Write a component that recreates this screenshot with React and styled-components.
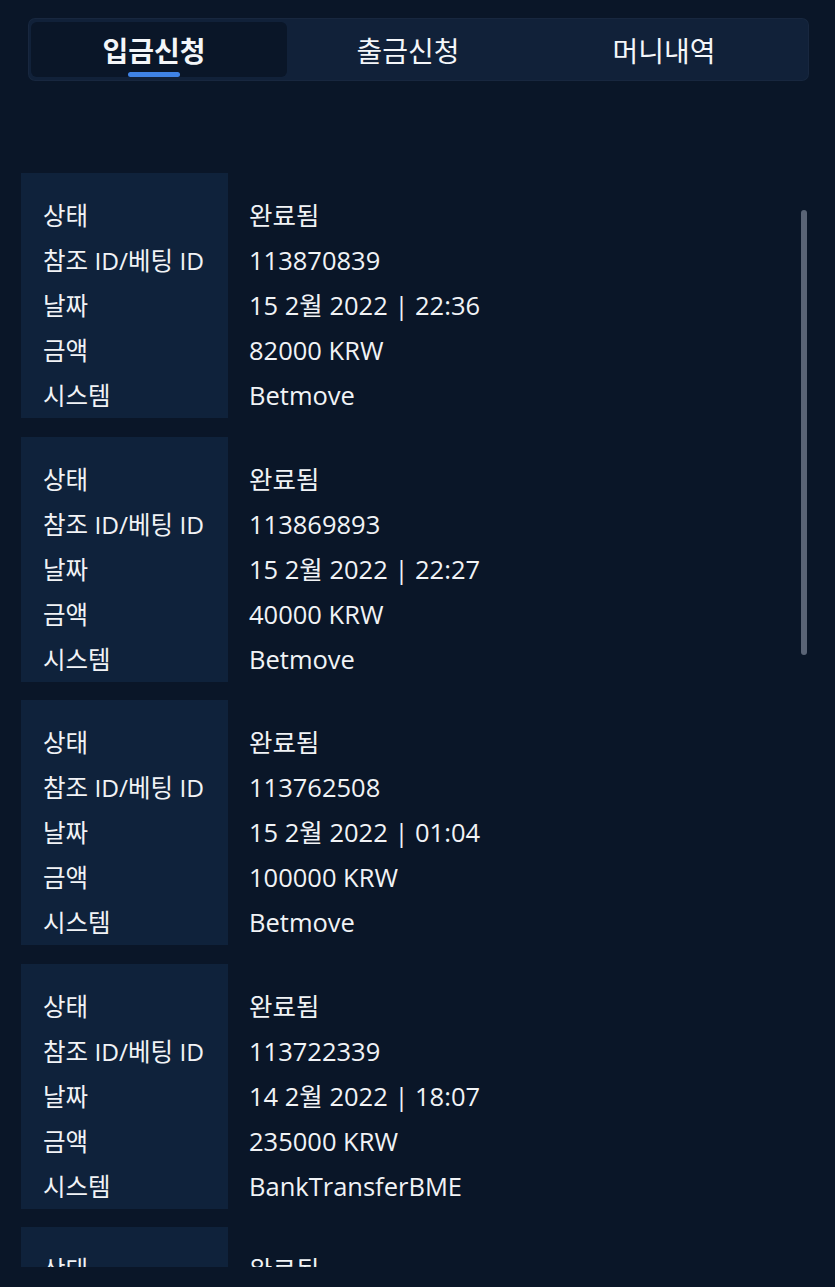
import React from "react";
import styled, { createGlobalStyle } from "styled-components";

const Global = createGlobalStyle`
  html, body { margin: 0; padding: 0; background: #0a1628; }
  body { font-family: "Open Sans", "Noto Sans CJK KR", sans-serif; color: #f1f3f6; }
  #root { min-height: 1287px; }
`;

const Page = styled.div`
  width: 835px;
  height: 1287px;
  background: #0a1628;
  display: flex;
  flex-direction: column;
  overflow: hidden;
`;

const TabBar = styled.div`
  margin: 18px 26px 0 28px;
  height: 63px;
  box-sizing: border-box;
  padding: 4px 10px 4px 3px;
  background: #112139;
  border-radius: 7px;
  box-shadow: inset 0 0 0 1px rgba(255, 255, 255, 0.03);
  display: flex;
`;

const Tab = styled.div`
  position: relative;
  flex: 0 0 256px;
  display: flex;
  align-items: center;
  justify-content: center;
  padding-right: ${(p) => (p.$active ? "10px" : "14px")};
  box-sizing: border-box;
  font-family: "Noto Sans CJK KR", sans-serif;
  font-size: 28px;
  font-weight: ${(p) => (p.$active ? 700 : 400)};
  color: #f4f6f9;
  background: ${(p) => (p.$active ? "#0a1628" : "transparent")};
  border-radius: 6px;
`;

const Indicator = styled.span`
  position: absolute;
  bottom: 0;
  left: 97px;
  width: 52px;
  height: 5px;
  border-radius: 3px;
  background: #3f83e6;
`;

const Viewport = styled.div`
  position: relative;
  margin-top: 92px;
  height: 1094px;
  overflow: hidden;
`;

const List = styled.div`
  display: flex;
  flex-direction: column;
  gap: 18.5px;
  padding-left: 21px;
`;

const Card = styled.div`
  display: grid;
  grid-template-columns: 207px 1fr;
  height: 245px;
  flex: 0 0 245px;
`;

const Col = styled.div`
  padding: 20px 0 0 ${(p) => (p.$label ? "22px" : "21px")};
  background: ${(p) => (p.$label ? "#0f223b" : "transparent")};
  display: flex;
  flex-direction: column;
  font-size: ${(p) => (p.$label ? "24.5px" : "25.5px")};
`;

const Line = styled.div`
  height: 45px;
  line-height: 45px;
  white-space: nowrap;
  color: #f1f3f6;
`;

const Thumb = styled.div`
  position: absolute;
  left: 801px;
  top: 37px;
  width: 6px;
  height: 445px;
  border-radius: 3px;
  background: #5a6476;
`;

const labels = ["상태", "참조 ID/베팅 ID", "날짜", "금액", "시스템"];

const rows = [
  ["완료됨", "113870839", "15 2월 2022 | 22:36", "82000 KRW", "Betmove"],
  ["완료됨", "113869893", "15 2월 2022 | 22:27", "40000 KRW", "Betmove"],
  ["완료됨", "113762508", "15 2월 2022 | 01:04", "100000 KRW", "Betmove"],
  ["완료됨", "113722339", "14 2월 2022 | 18:07", "235000 KRW", "BankTransferBME"],
  ["완료됨", "113700000", "14 2월 2022 | 12:00", "50000 KRW", "Betmove"],
];

export default function App() {
  return (
    <Page>
      <Global />
      <TabBar>
        <Tab $active>
          입금신청
          <Indicator />
        </Tab>
        <Tab>출금신청</Tab>
        <Tab>머니내역</Tab>
      </TabBar>
      <Viewport>
        <List>
          {rows.map((r, i) => (
            <Card key={i}>
              <Col $label>
                {labels.map((l) => (
                  <Line key={l}>{l}</Line>
                ))}
              </Col>
              <Col>
                {r.map((v, j) => (
                  <Line key={j}>{v}</Line>
                ))}
              </Col>
            </Card>
          ))}
        </List>
        <Thumb />
      </Viewport>
    </Page>
  );
}
